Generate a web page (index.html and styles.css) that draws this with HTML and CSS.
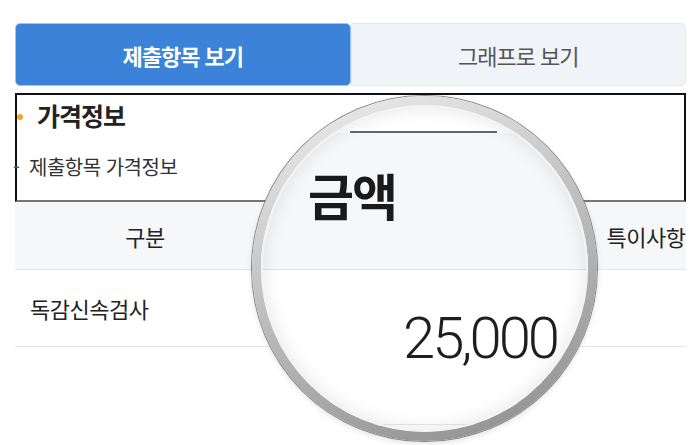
FILE: index.html
```html
<!DOCTYPE html>
<html lang="ko">
<head>
  <meta charset="UTF-8" />
  <meta name="viewport" content="width=device-width, initial-scale=1.0" />
  <title>가격정보</title>
  <link rel="stylesheet" href="styles.css">
</head>
<body>
  <main class="wrap">
    <div class="tabs">
      <button class="tab active">제출항목 보기</button>
      <button class="tab">그래프로 보기</button>
    </div>

    <section class="info">
      <h2 class="info-title">가격정보</h2>
      <p class="info-sub"><span class="dash">-</span>제출항목 가격정보</p>
    </section>

    <div class="table-clip">
      <div class="price-table">
        <div class="cell head">구분</div>
        <div class="cell head"></div>
        <div class="cell head">특이사항</div>
        <div class="cell name">독감신속검사</div>
        <div class="cell"></div>
        <div class="cell"></div>
      </div>
    </div>

    <!-- 돋보기: 금액 칸을 확대해서 보여줌 -->
    <div class="lens">
      <div class="lens-top"></div>
      <div class="lens-rule"></div>
      <div class="lens-head">금액</div>
      <div class="lens-row">25,000</div>
    </div>
  </main>
</body>
</html>
```

FILE: styles.css
```css
body {
  margin: 0;
  background: #fff;
  font-family: "Noto Sans CJK KR", "Noto Sans", sans-serif;
  color: #222;
}
.wrap {
  position: relative;
  width: 671px;
  height: 422px;
  padding: 23px 0 0 15px;
  overflow: hidden;
}
.tabs {
  display: flex;
  height: 63px;
}
.tab {
  flex: 1;
  border: 1px solid #e3e9f1;
  background: #f0f4f9;
  color: #555;
  font-family: inherit;
  font-size: 22px;
  letter-spacing: -1px;
  border-radius: 0 5px 5px 0;
  padding: 0;
}
.tab.active {
  background: #3b82d8;
  border-color: #9cc7f0;
  color: #fff;
  font-weight: bold;
  border-radius: 5px;
}
.info {
  margin-top: 7px;
  height: 105px;
  border: 2px solid #111;
  border-bottom-color: #777;
  position: relative;
}
.info-title {
  margin: 0;
  padding: 2px 0 0 20px;
  font-size: 25px;
  font-weight: bold;
  letter-spacing: -1px;
  color: #222;
}
.info-title::before {
  content: "";
  position: absolute;
  left: 0;
  top: 19px;
  width: 6px;
  height: 6px;
  border-radius: 50%;
  background: #f2a428;
}
.info-sub {
  margin: 19px 0 0 0;
  font-size: 20px;
  letter-spacing: -0.5px;
  color: #333;
}
.dash {
  display: inline-block;
  width: 16px;
  color: #555;
  margin-left: -4px;
}
.table-clip {
  width: 671px;
  overflow: hidden;
}
.price-table {
  display: grid;
  grid-template-columns: 260px 260px 222px;
  width: 742px;
}
.cell {
  height: 76px;
  display: flex;
  align-items: center;
  border-bottom: 1px solid #e6e6e6;
  font-size: 22px;
  letter-spacing: -0.5px;
}
.cell.head {
  height: 67px;
  background: #f6f7f9;
  justify-content: center;
  font-size: 22px;
  color: #222;
}
.cell.name {
  padding-left: 15px;
}
.lens {
  position: absolute;
  left: 252px;
  top: 96px;
  width: 327px;
  height: 327px;
  border-radius: 50%;
  border: 9px solid transparent;
  background: linear-gradient(#fff, #fff) padding-box,
    linear-gradient(160deg, #f0f0f0, #c0c0c0 45%, #8c8c8c) border-box;
  box-shadow: 0 0 0 1px #888, 0 2px 6px rgba(0, 0, 0, 0.15);
  overflow: hidden;
}
.lens::after {
  content: "";
  position: absolute;
  inset: 0;
  border-radius: 50%;
  box-shadow: inset 0 0 0 2px #f4f4f4, inset 0 0 20px rgba(0, 0, 0, 0.12);
}
.lens-top {
  height: 26px;
}
.lens-rule {
  height: 2px;
  margin: 0 91px 0 89px;
  background: #666;
}
.lens-head {
  height: 137px;
  background: #f6f7f9;
  border-bottom: 1px solid #e2e2e2;
  padding-left: 47px;
  box-sizing: border-box;
  font-size: 50px;
  font-weight: bold;
  letter-spacing: -2px;
  line-height: 1;
  padding-top: 36px;
  color: #1a1a1a;
}
.lens-row {
  height: 155px;
  border-bottom: 1px solid #e8e8e8;
  box-sizing: border-box;
  text-align: right;
  padding-right: 31px;
  padding-top: 34px;
  font-family: Roboto, "Noto Sans", sans-serif;
  font-weight: 300;
  font-size: 58px;
  letter-spacing: -3px;
  line-height: 1.2;
  color: #1e1e1e;
}
```
